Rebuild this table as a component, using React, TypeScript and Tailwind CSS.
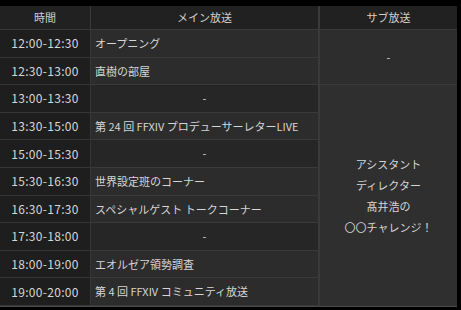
const rows: { time: string; main: string }[] = [
  { time: "12:00-12:30", main: "オープニング" },
  { time: "12:30-13:00", main: "直樹の部屋" },
  { time: "13:00-13:30", main: "-" },
  { time: "13:30-15:00", main: "第 24 回 FFXIV プロデューサーレターLIVE" },
  { time: "15:00-15:30", main: "-" },
  { time: "15:30-16:30", main: "世界設定班のコーナー" },
  { time: "16:30-17:30", main: "スペシャルゲスト トークコーナー" },
  { time: "17:30-18:00", main: "-" },
  { time: "18:00-19:00", main: "エオルゼア領勢調査" },
  { time: "19:00-20:00", main: "第 4 回 FFXIV コミュニティ放送" },
];

export default function App() {
  return (
    <div className="w-[461px] h-[310px] bg-black pt-[6px] font-['Noto_Sans_CJK_JP',sans-serif] text-[11px] text-[#d6d6d6]">
      <div className="grid w-[457px] grid-cols-[91px_229px_137px] grid-rows-[24px_repeat(10,27.6px)] border-r border-b border-[#4a4a4a]">
        {/* header */}
        <div className="flex items-center justify-center bg-[#212121] border-r border-b border-[#3a3a3a] text-[#cfcfcf]">時間</div>
        <div className="flex items-center justify-center bg-[#212121] border-r-2 border-b border-[#3a3a3a] text-[#cfcfcf]">メイン放送</div>
        <div className="flex items-center justify-center bg-[#212121] border-b border-[#3a3a3a] text-[#cfcfcf]">サブ放送</div>

        {rows.map((r, i) => (
          <div key={r.time} className="contents">
            <div
              className="flex items-center justify-center bg-[#1e1e1e] border-r border-b border-[#363636] text-[12px] tracking-[0.3px]"
              style={{ gridRow: i + 2, gridColumn: 1 }}
            >
              {r.time}
            </div>
            <div
              className={
                "flex items-center border-r-2 border-b border-[#3a3a3a] " +
                (r.main === "-" ? "justify-center bg-[#262626]" : "pl-[4px] bg-[#2c2c2c]")
              }
              style={{ gridRow: i + 2, gridColumn: 2 }}
            >
              {r.main}
            </div>
          </div>
        ))}

        {/* sub broadcast column */}
        <div className="col-start-3 row-start-2 row-span-2 flex items-center justify-center bg-[#2d2d2d] border-b border-[#3a3a3a]">
          -
        </div>
        <div className="col-start-3 row-start-4 row-span-8 flex flex-col items-center justify-center bg-[#2f2f2f] leading-[21px]">
          <span>アシスタント</span>
          <span>ディレクター</span>
          <span>髙井浩の</span>
          <span>〇〇チャレンジ！</span>
        </div>
      </div>
    </div>
  );
}
